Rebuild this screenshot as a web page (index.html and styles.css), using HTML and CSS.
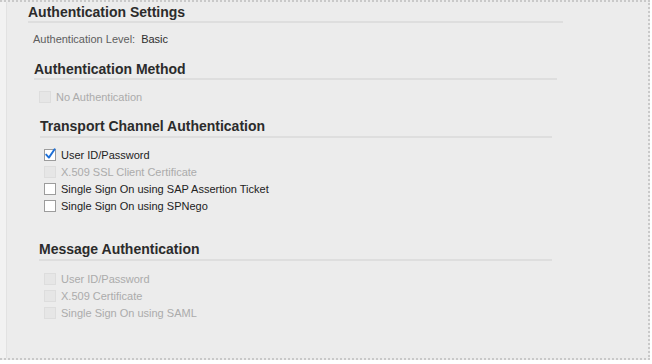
FILE: index.html
```html
<!DOCTYPE html>
<html>
<head>
<meta charset="utf-8">
<link rel="stylesheet" href="styles.css">
</head>
<body>
<div class="frame">
  <div class="rail"></div>
  <div class="main">
    <section class="group g1">
      <h2 class="title t1">Authentication Settings</h2>
      <div class="level"><span class="lbl">Authentication Level:</span><span class="val">Basic</span></div>
      <section class="group g2">
        <h3 class="title t2">Authentication Method</h3>
        <ul class="opts o2">
          <li class="opt off"><span class="box"></span><span>No Authentication</span></li>
        </ul>
        <section class="group g3">
          <h3 class="title t3">Transport Channel Authentication</h3>
          <ul class="opts o3">
            <li class="opt"><span class="box"><svg width="13" height="13" viewBox="0 0 13 13"><path d="M2.2 6.6 L4.9 9.6 L10.6 1.2" fill="none" stroke="#1d6fd6" stroke-width="1.9" stroke-linecap="round" stroke-linejoin="round"/></svg></span><span>User ID/Password</span></li>
            <li class="opt off"><span class="box"></span><span>X.509 SSL Client Certificate</span></li>
            <li class="opt"><span class="box"></span><span>Single Sign On using SAP Assertion Ticket</span></li>
            <li class="opt"><span class="box"></span><span>Single Sign On using SPNego</span></li>
          </ul>
        </section>
        <section class="group g4">
          <h3 class="title t3">Message Authentication</h3>
          <ul class="opts o4">
            <li class="opt off"><span class="box"></span><span>User ID/Password</span></li>
            <li class="opt off"><span class="box"></span><span>X.509 Certificate</span></li>
            <li class="opt off"><span class="box"></span><span>Single Sign On using SAML</span></li>
          </ul>
        </section>
      </section>
    </section>
  </div>
</div>
</body>
</html>
```
FILE: styles.css
```css
html, body {
  margin: 0;
  padding: 0;
  background: #ffffff;
}
body {
  font-family: "Liberation Sans", Arial, sans-serif;
  color: #333;
}
.frame {
  display: flex;
  width: 650px;
  height: 360px;
  box-sizing: border-box;
  border-top: 2px dotted #c9c9c9;
  border-right: 2px dotted #c9c9c9;
  border-bottom: 2px dotted #c9c9c9;
  background: #ececec;
}
.rail {
  width: 6px;
  background: #f2f2f2;
  border-right: 1px solid #e2e2e2;
  flex: none;
}
.main {
  flex: 1;
  background: #ececec;
  padding-left: 21px;
}
.g1 {
  width: 535px;
}
.title {
  margin: 0;
  font-weight: bold;
  font-size: 14px;
  line-height: 18px;
  color: #2b2b2b;
  border-bottom: 2px solid #dedede;
}
.t1 { margin-top: 1px; }
.level {
  margin: 9px 0 0 5px;
  font-size: 11px;
  line-height: 14px;
  display: flex;
  gap: 6px;
}
.level .lbl { color: #5e5e5e; }
.level .val { color: #2e2e2e; }
.g2 {
  margin: 14px 6px 0 6px;
}
.g3 {
  margin: 12px 5px 0 6px;
}
.g4 {
  margin: 26px 5px 0 5px;
}
.t3 { padding-bottom: 1px; }
.opts {
  list-style: none;
  margin: 0;
  padding: 0;
}
.o2 { margin: 8px 0 0 5px; }
.o3 { margin: 8px 0 0 4px; }
.o4 { margin: 9px 0 0 5px; }
.opt {
  display: flex;
  align-items: center;
  gap: 5px;
  height: 17px;
  font-size: 11px;
  color: #222;
}
.box {
  position: relative;
  width: 12px;
  height: 12px;
  box-sizing: border-box;
  border: 1px solid #9c9c9c;
  background: #fff;
  flex: none;
}
.box svg {
  position: absolute;
  left: -1px;
  top: -2px;
}
.opt.off { color: #ababab; }
.opt.off .box {
  background: #e6e6e6;
  border-color: #dddddd;
}
```
